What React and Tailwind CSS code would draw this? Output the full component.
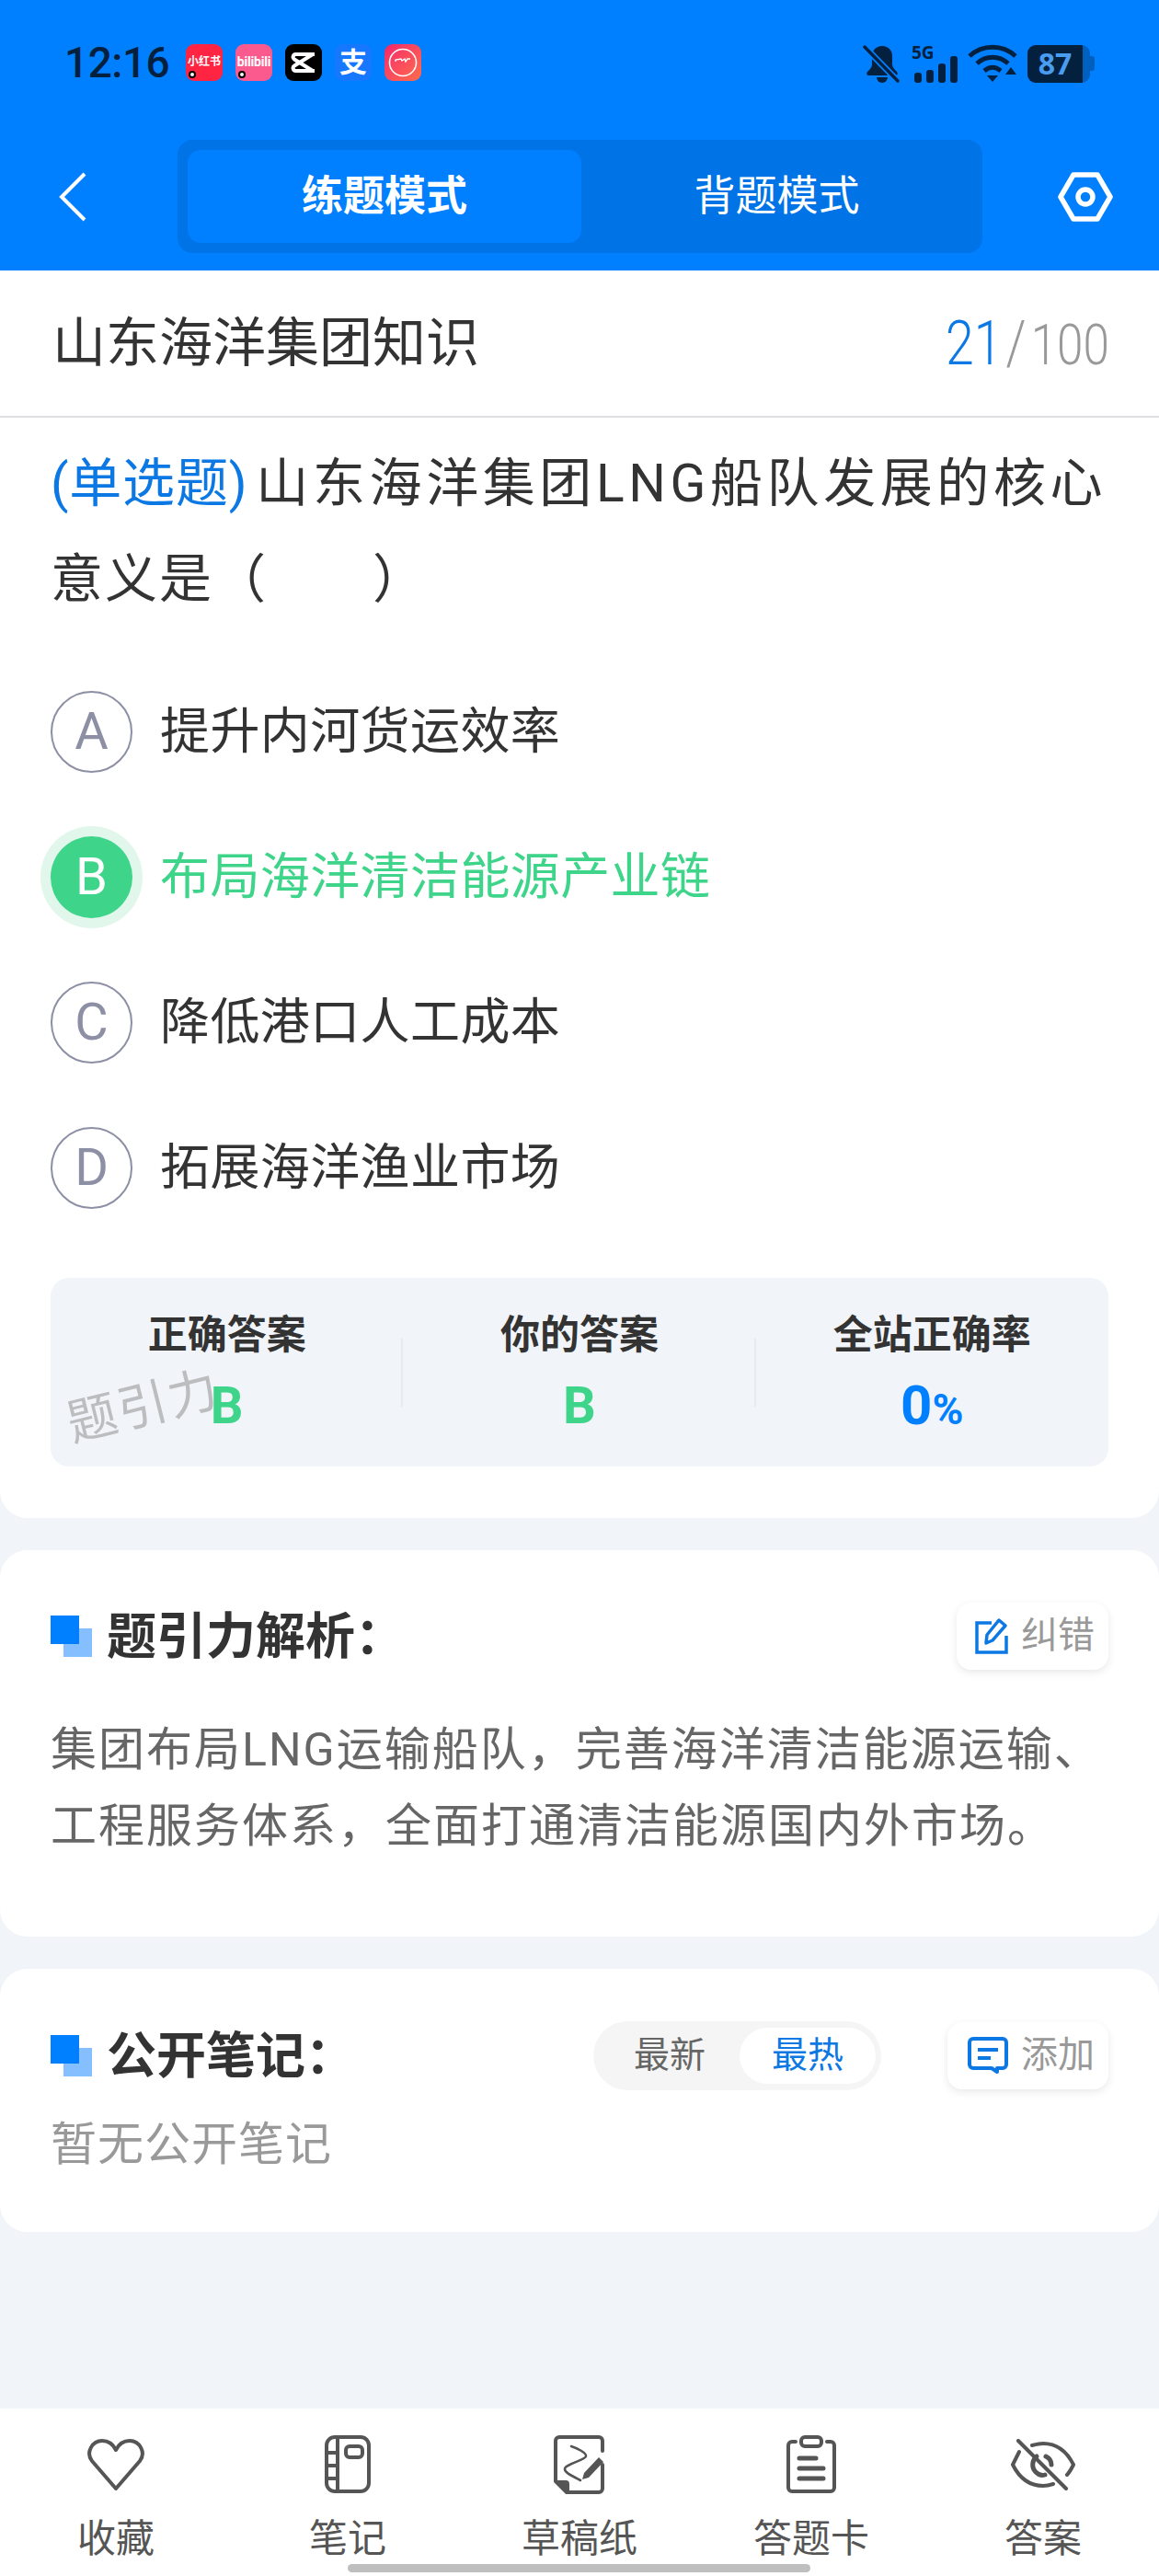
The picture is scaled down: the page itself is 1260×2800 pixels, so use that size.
const FONT = "font-['Roboto','Noto_Sans_CJK_SC',sans-serif]";

const AppIcon = ({ className, children, dot }) => (
  <div className={`relative w-10 h-10 rounded-[9px] overflow-hidden flex items-center justify-center ${className}`}>
    {children}
    {dot && <span className="absolute left-[3px] bottom-[3px] w-2 h-2 rounded-full bg-white border-2 border-black" />}
  </div>
);

const StatusBar = () => (
  <div className="h-[48px] mt-[48px] -mb-[8px] flex items-start pl-[70px] pr-[70px]">
    <span className="text-[46px] leading-[40px] font-medium text-[#04203f] w-[132px] tracking-[-0.5px]">12:16</span>
    <div className="flex gap-[14px]">
      <AppIcon className="bg-[#ff2442]" dot>
        <span className="text-[12px] leading-none font-bold text-white -mt-[2px] whitespace-nowrap">小红书</span>
      </AppIcon>
      <AppIcon className="bg-[#fb5a8f]" dot>
        <span className="text-[14px] leading-none font-bold text-white -mt-[3px] tracking-[-0.2px]">bilibili</span>
      </AppIcon>
      <AppIcon className="bg-black">
        <svg width="28" height="24" viewBox="0 0 28 24" fill="none" stroke="white" strokeWidth="4" strokeLinejoin="round">
          <path d="M26 3H6a3 3 0 0 0-2 5.5L24 21M26 21H6a3 3 0 0 1-2-5.5L24 3" />
        </svg>
      </AppIcon>
      <AppIcon className="bg-[#1677ff]">
        <span className="text-[30px] leading-none text-white font-bold">支</span>
      </AppIcon>
      <AppIcon className="bg-gradient-to-br from-[#f5206a] to-[#ff6a4a]">
        <svg width="32" height="32" viewBox="0 0 32 32" fill="none" stroke="white" strokeWidth="1.6">
          <circle cx="16" cy="16" r="14.5" />
          <path d="M8 15v-2l6-1 1 2 3-2 1 3 2-3h3" strokeWidth="1.4" />
        </svg>
      </AppIcon>
    </div>
    <div className="ml-auto flex items-center gap-[11px]">
      <svg width="42" height="41" viewBox="0 0 42 41" fill="#04203f">
        <path d="M21 1c-7 0-11 5-11 11v9c0 3-2 5-5 8-1 1-1 4 1 4h30c2 0 2-3 1-4-3-3-5-5-5-8v-9c0-6-4-11-11-11z" />
        <path d="M15 35h12a6 6 0 0 1-12 0z" />
        <path d="M2 2l36 37" stroke="#0080ff" strokeWidth="7" />
        <path d="M2 2l36 37" stroke="#04203f" strokeWidth="3.4" strokeLinecap="round" />
      </svg>
      <div className="relative w-[50px] h-[41px]">
        <span className="absolute left-0 -top-[3px] text-[19px] leading-[22px] font-bold text-[#04203f] font-['Noto_Sans']">5G</span>
        <div className="absolute left-[3px] bottom-0 flex items-end gap-[5px]">
          <span className="w-[8px] h-[11px] rounded-[3px] bg-[#04203f]" />
          <span className="w-[8px] h-[14px] rounded-[3px] bg-[#04203f]" />
          <span className="w-[8px] h-[21px] rounded-[3px] bg-[#04203f]" />
          <span className="w-[8px] h-[29px] rounded-[3px] bg-[#04203f]" />
        </div>
      </div>
      <svg width="54" height="42" viewBox="0 0 54 42" fill="none" stroke="#04203f" strokeWidth="5">
        <path d="M2 13c14-13 36-13 50 0" />
        <path d="M10 21c10-9 24-9 34 0" />
        <path d="M18 29c6-5 12-5 18 0" />
        <path d="M21 34h12l-6 7z" fill="#04203f" stroke="none" />
        <path d="M41 33l6-8 6 8z" fill="#04203f" stroke="none" />
      </svg>
      <div className="flex items-center">
        <div className="relative w-[68px] h-[41px] rounded-[9px] bg-[#0060c0] overflow-hidden">
          <div className="w-[60px] h-full bg-[#04203f] flex items-center justify-center">
            <span className="text-[32px] leading-none font-bold text-[#4a9cf0] font-['Noto_Sans']">87</span>
          </div>
        </div>
        <span className="w-[5px] h-[16px] rounded-r-[3px] bg-[#0060c0]" />
      </div>
    </div>
  </div>
);

const Header = () => (
  <div className="bg-[#0080ff] h-[294px] shrink-0">
    <StatusBar />
    <div className="flex items-center mt-[64px] pl-[64px] pr-[50px]">
      <svg width="30" height="54" viewBox="0 0 30 54" fill="none" stroke="white" strokeWidth="4">
        <path d="M28 2L3 27l25 25" />
      </svg>
      <div className="ml-[99px] w-[875px] h-[123px] rounded-[16px] bg-[#0073e6] flex items-center p-[11px] text-white text-[45px]">
        <div className="w-[428px] h-[101px] rounded-[14px] bg-[#0080ff] flex items-center justify-center font-bold">练题模式</div>
        <div className="flex-1 flex items-center justify-center">背题模式</div>
      </div>
      <svg className="ml-auto" width="60" height="54" viewBox="0 0 60 54" fill="none" stroke="white">
        <path d="M17 3h26l14 24-14 24H17L3 27z" strokeWidth="5.5" strokeLinejoin="round" />
        <circle cx="30" cy="27" r="8" strokeWidth="5.5" />
      </svg>
    </div>
  </div>
);

const Option = ({ letter, text, active }) => (
  <div className="h-[158px] flex items-center">
    <div
      className={
        active
          ? 'w-[89px] h-[89px] rounded-full bg-[#3ed48a] ring-[11px] ring-[#e2f7ec] text-white flex items-center justify-center text-[56px]'
          : 'w-[89px] h-[89px] rounded-full border-[2.5px] border-[#8d90a5] text-[#8d90a5] flex items-center justify-center text-[56px]'
      }
    >
      {letter}
    </div>
    <span className={`ml-[30px] text-[54px] tracking-[0.4px] ${active ? 'text-[#3ed48a]' : 'text-[#333333]'}`}>{text}</span>
  </div>
);

const Stat = ({ label, children, divider }) => (
  <div className="relative flex-1 flex flex-col items-center pt-[35px]">
    <div className="text-[43px] leading-[54px] font-bold text-[#333333]">{label}</div>
    <div className="mt-[23px] h-[54px] flex items-center">{children}</div>
    {divider && <span className="absolute right-0 top-[66px] w-[2px] h-[74px] bg-[#e8eaec]" />}
  </div>
);

const Section = ({ title, right }) => (
  <div className="flex items-center justify-between">
    <div className="flex items-center">
      <div className="relative w-[45px] h-[45px] shrink-0">
        <span className="absolute right-0 bottom-0 w-[31px] h-[31px] bg-[#85bfff]" />
        <span className="absolute left-0 top-0 w-[31px] h-[31px] bg-[#0080ff]" />
      </div>
      <span className="ml-[16px] mt-[3px] text-[54px] leading-[73px] font-bold text-[#333333]">{title}</span>
    </div>
    {right}
  </div>
);

const SmallBtn = ({ icon, label, className }) => (
  <div className={`h-[73px] rounded-[16px] bg-white shadow-[0_3px_10px_rgba(0,0,0,0.09)] flex items-center justify-end pr-[15px] ${className}`}>
    {icon}
    <span className="ml-[14px] text-[40px] leading-none text-[#999999]">{label}</span>
  </div>
);

const NAV = [
  {
    label: '收藏',
    icon: (
      <svg width="64" height="56" viewBox="0 0 64 56" fill="none" stroke="#555555" strokeWidth="4" strokeLinejoin="round">
        <path d="M32 54L6 24C-1 15 6 2 17 2c7 0 12 4 15 10 3-6 8-10 15-10 11 0 18 13 11 22z" />
      </svg>
    ),
  },
  {
    label: '笔记',
    icon: (
      <svg width="50" height="63" viewBox="0 0 50 63" fill="none" stroke="#555555" strokeWidth="4">
        <rect x="2" y="2" width="46" height="59" rx="9" />
        <path d="M14 2v59M2 19h12M2 33h12M2 47h12" />
        <rect x="23" y="12" width="18" height="12" rx="4" />
      </svg>
    ),
  },
  {
    label: '草稿纸',
    icon: (
      <svg width="56" height="64" viewBox="0 0 56 64" fill="none" stroke="#555555" strokeWidth="4" strokeLinejoin="round" strokeLinecap="round">
        <path d="M53 17V6a4 4 0 0 0-4-4H6a4 4 0 0 0-4 4v44l12 12h35a4 4 0 0 0 4-4V32" />
        <path d="M2 50h11a3 3 0 0 1 3 3v9z" fill="#555555" strokeWidth="2" />
        <path d="M19 12c6 2 17 7 16 11-1 4-24 9-23 14 0 4 10 8 17 12" strokeWidth="2.6" fill="none" />
        <path d="M33 41l16-17 5 5-16 17-7 2z" fill="#555555" stroke="none" />
      </svg>
    ),
  },
  {
    label: '答题卡',
    icon: (
      <svg width="54" height="63" viewBox="0 0 54 63" fill="none" stroke="#555555" strokeWidth="4" strokeLinecap="round" strokeLinejoin="round">
        <path d="M10 7H6a4 4 0 0 0-4 4v46a4 4 0 0 0 4 4h42a4 4 0 0 0 4-4V11a4 4 0 0 0-4-4h-4" />
        <rect x="16" y="2" width="22" height="10" rx="4" />
        <path d="M14 25h18M14 36h26M14 47h26" strokeWidth="5" />
      </svg>
    ),
  },
  {
    label: '答案',
    icon: (
      <svg width="70" height="56" viewBox="0 0 70 56" fill="none" stroke="#555555" strokeWidth="4" strokeLinecap="round" strokeLinejoin="round">
        <path d="M9 14L2 28c7 14 18 23 33 23 4 0 8-1 11-2M23 7c4-1 8-2 12-2 15 0 26 9 33 23-2 4-4 8-7 11" />
        <path d="M28 19c-5 4-6 12-1 17 3 3 7 4 10 3M38 19c4 2 6 5 6 9" strokeWidth="5" />
        <path d="M8 2l52 52" />
      </svg>
    ),
  },
];

export default function App() {
  return (
    <div className={`relative w-[1260px] h-[2800px] flex flex-col bg-[#f1f5f9] ${FONT}`}>
      <Header />

      {/* Question card */}
      <div className="bg-white rounded-b-[30px] h-[1356px] shrink-0">
        <div className="h-[160px] flex items-center justify-between pl-[57px] pr-[54px] border-b-2 border-[#dddfe2]">
          <span className="text-[58px] text-[#333333]">山东海洋集团知识</span>
          <div className="flex items-baseline font-light scale-x-[0.84] origin-right">
            <span className="text-[66px] text-[#0b78e3]">21</span>
            <span className="ml-[5px] text-[66px] text-[#999999]">/</span>
            <span className="ml-[6px] text-[61px] text-[#999999]">100</span>
          </div>
        </div>
        <div className="px-[55px]">
          <p className="pt-[20px] text-[57px] leading-[104px] tracking-[4.6px] text-[#333333] whitespace-nowrap">
            <span className="text-[#0b78e3] tracking-[0.8px]">(单选题)</span>
            <span className="ml-[9px]">山东海洋集团LNG船队发展的核心</span>
            <br />
            <span className="tracking-[2px]">
              意义是（<span className="inline-block w-[114px]" />）
            </span>
          </p>
          <div className="mt-[34px]">
            <Option letter="A" text="提升内河货运效率" />
            <Option letter="B" text="布局海洋清洁能源产业链" active />
            <Option letter="C" text="降低港口人工成本" />
            <Option letter="D" text="拓展海洋渔业市场" />
          </div>
          <div className="relative mt-[41px] h-[205px] rounded-[20px] bg-[#f1f5f9] flex">
            <Stat label="正确答案" divider>
              <span className="text-[56px] font-bold text-[#3ed48a]">B</span>
            </Stat>
            <Stat label="你的答案" divider>
              <span className="text-[56px] font-bold text-[#3ed48a]">B</span>
            </Stat>
            <Stat label="全站正确率">
              <span className="text-[60px] font-bold text-[#0080ff]">0</span>
              <span className="text-[46px] font-bold text-[#0080ff] mt-[8px]">%</span>
            </Stat>
            <span className="absolute left-[17px] top-[105px] text-[54px] leading-[70px] text-[#bbbdbf] -rotate-[14deg] tracking-[2px]">题引力</span>
          </div>
        </div>
      </div>

      {/* Analysis */}
      <div className="mt-[35px] h-[420px] shrink-0 bg-white rounded-[30px] px-[55px] pt-[55px]">
        <Section
          title="题引力解析："
          right={
            <SmallBtn
              className="w-[165px]"
              label="纠错"
              icon={
                <svg width="36" height="40" viewBox="0 0 36 40" fill="none" stroke="#0b78e3" strokeWidth="3.5">
                  <path d="M18 6H2v32h32V20" />
                  <path d="M12 28l1-9L26 3l7 6-14 16z" strokeLinejoin="round" />
                </svg>
              }
            />
          }
        />
        <p className="mt-[45px] text-[50px] leading-[83px] tracking-[2px] text-[#666666] whitespace-nowrap">
          集团布局LNG运输船队，完善海洋清洁能源运输、
          <br />
          工程服务体系，全面打通清洁能源国内外市场。
        </p>
      </div>

      {/* Public notes */}
      <div className="mt-[35px] h-[286px] shrink-0 bg-white rounded-[30px] px-[55px] pt-[56px]">
        <Section
          title="公开笔记："
          right={
            <div className="flex items-center">
              <div className="w-[313px] h-[75px] rounded-full bg-[#f5f5f5] flex items-center pl-[44px] pr-[6px] text-[39px]">
                <span className="text-[#666666]">最新</span>
                <span className="ml-auto w-[148px] h-[61px] rounded-full bg-white flex items-center justify-center text-[#0b78e3]">最热</span>
              </div>
              <SmallBtn
                className="ml-[72px] w-[175px]"
                label="添加"
                icon={
                  <svg width="44" height="40" viewBox="0 0 44 40" fill="none" stroke="#0b78e3" strokeWidth="4" strokeLinejoin="round">
                    <path d="M6 2h32a4 4 0 0 1 4 4v24a4 4 0 0 1-4 4h-6v4l-6-4H6a4 4 0 0 1-4-4V6a4 4 0 0 1 4-4z" />
                    <path d="M11 14h22M11 23h14" />
                  </svg>
                }
              />
            </div>
          }
        />
        <p className="mt-[24px] text-[50px] leading-[70px] tracking-[1px] text-[#999999]">暂无公开笔记</p>
      </div>

      {/* Bottom nav */}
      <div className="mt-auto h-[182px] shrink-0 bg-white flex">
        {NAV.map((item) => (
          <div key={item.label} className="w-[252px] flex flex-col items-center">
            <div className="h-[63px] mt-[29px] flex items-center justify-center">{item.icon}</div>
            <span className="mt-[25px] text-[42px] leading-[50px] text-[#555555]">{item.label}</span>
          </div>
        ))}
      </div>
      <div className="absolute left-[378px] bottom-[4px] w-[503px] h-[9px] rounded-full bg-[#bfbfbf]" />
    </div>
  );
}
